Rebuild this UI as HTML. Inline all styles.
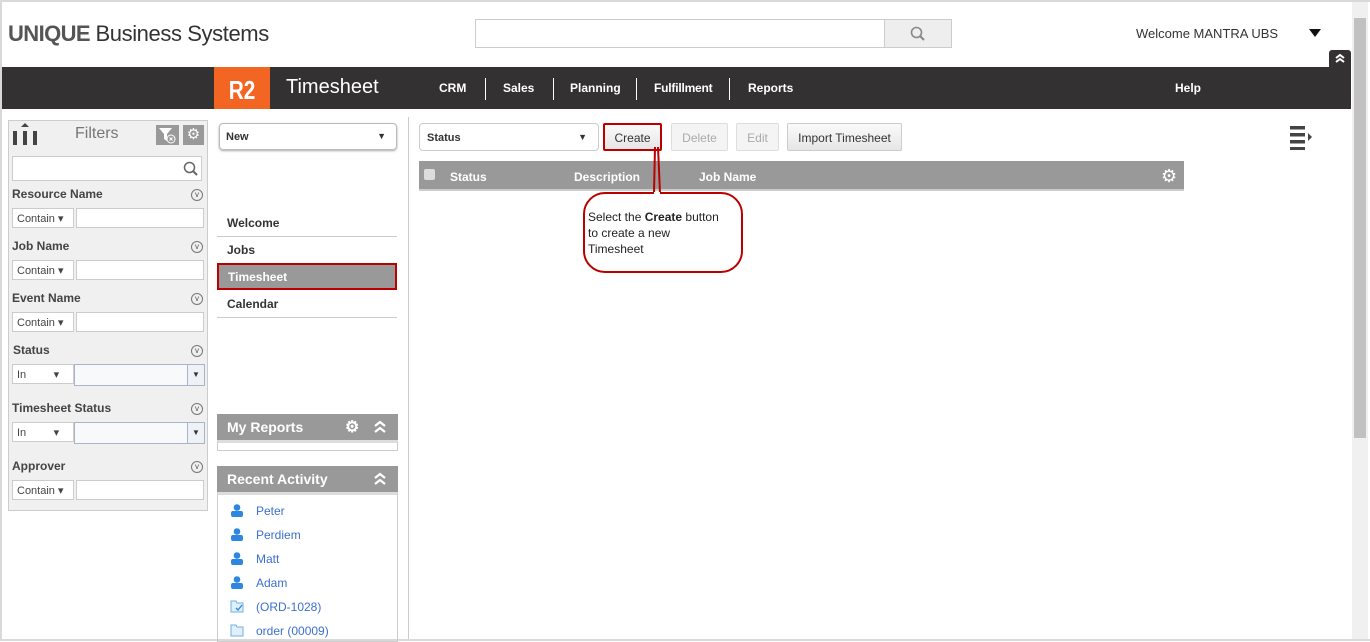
<!DOCTYPE html>
<html><head><style>
*{box-sizing:border-box;margin:0;padding:0}
body{width:1370px;height:641px;overflow:hidden;font-family:"Liberation Sans",Arial,sans-serif;font-size:12px;color:#333;background:#fff;position:relative}
.a{position:absolute}
.frame{left:0;top:0;width:1370px;height:641px;border:2px solid #d9d9d9;border-right:none;border-bottom:2px solid #d9d9d9}
.bar{left:2px;top:67px;width:1349px;height:42px;background:#333132}
.nav{top:81px;color:#fff;font-weight:bold;font-size:12px}
.sep{top:78px;width:1px;height:22px;background:#fff}
.fp{left:8px;top:120px;width:200px;height:391px;background:#f0f0f0;border:1px solid #ccc}
.lab{font-weight:bold;font-size:12px;color:#444}
.sel{background:#fff;border:1px solid #ccc;height:20px;font-size:11px;color:#444;padding:3px 4px}
.inp{background:#fff;border:1px solid #ccc;height:20px}
.circ{width:12px;height:12px;border:1px solid #777;border-radius:50%;font-size:8px;line-height:10px;text-align:center;color:#555}
.mi{left:217px;width:180px;height:27px;border-bottom:1px solid #ccc;font-weight:bold;padding:6px 10px;font-size:12px;color:#333}
.hd{left:217px;width:181px;height:26px;background:#999;color:#fff;font-weight:bold;font-size:14px;padding:5px 10px}
.btn{top:123px;height:28px;border:1px solid #ccc;background:linear-gradient(#fafafa,#e6e6e6);font-size:12px;text-align:center;padding-top:7px;border-radius:2px}
.ra{left:256px;color:#3b6fd0;font-size:12px}
.pi{left:230px;width:14px;height:13px}
</style></head><body>
<div class="a frame"></div>
<div class="a" style="left:8px;top:21px;font-size:22px;color:#555;letter-spacing:-0.6px"><b style="font-weight:900;color:#555">UNIQUE</b> <span style="color:#333;letter-spacing:-0.4px">Business Systems</span></div>
<div class="a" style="left:475px;top:19px;width:410px;height:29px;border:1px solid #ccc"></div>
<div class="a" style="left:884px;top:19px;width:68px;height:29px;border:1px solid #ccc;background:#eee"></div>
<svg class="a" style="left:910px;top:26px" width="16" height="16"><circle cx="6.5" cy="6.5" r="5" stroke="#888" stroke-width="1.6" fill="none"/><line x1="10" y1="10" x2="14" y2="14" stroke="#888" stroke-width="2"/></svg>
<div class="a" style="left:1136px;top:26px;font-size:13px;color:#333">Welcome MANTRA UBS</div>
<div class="a" style="left:1309px;top:29px;border-left:6px solid transparent;border-right:6px solid transparent;border-top:8px solid #111"></div>
<div class="a" style="left:1329px;top:50px;width:22px;height:17px;background:#333132;border-radius:3px 3px 0 0"></div>
<svg class="a" style="left:1334px;top:53px" width="12" height="11"><path d="M2 5l4-3 4 3M2 9l4-3 4 3" stroke="#fff" stroke-width="2" fill="none"/></svg>
<div class="a" style="left:1352px;top:2px;width:16px;height:637px;background:#f0f0f0"></div>
<div class="a" style="left:1354px;top:18px;width:12px;height:420px;background:#c1c1c1"></div>
<div class="a bar"></div>
<div class="a" style="left:214px;top:67px;width:56px;height:42px;background:#f26522"></div>
<div class="a" style="left:220px;top:75px;width:44px;height:30px;color:#fff;font-size:26px;font-weight:bold;text-align:center;transform:scaleX(0.8);line-height:30px">R2</div>
<div class="a" style="left:286px;top:76px;color:#fff;font-size:20px">Timesheet</div>
<div class="a nav" style="left:439px">CRM</div><div class="a sep" style="left:485px"></div>
<div class="a nav" style="left:503px">Sales</div><div class="a sep" style="left:553px"></div>
<div class="a nav" style="left:570px">Planning</div><div class="a sep" style="left:636px"></div>
<div class="a nav" style="left:654px;letter-spacing:-0.2px">Fulfillment</div><div class="a sep" style="left:729px"></div>
<div class="a nav" style="left:748px">Reports</div>
<div class="a nav" style="left:1175px">Help</div>

<div class="a fp"></div>
<svg class="a" style="left:12px;top:123px" width="28" height="24"><path d="M13 0l4 4h-8z" fill="#444"/><rect x="1" y="8" width="4" height="14" fill="#444"/><rect x="11" y="8" width="4" height="14" fill="#444"/><rect x="21" y="8" width="4" height="14" fill="#444"/></svg>
<div class="a" style="left:75px;top:125px;font-size:16px;color:#777">Filters</div>
<div class="a" style="left:156px;top:125px;width:23px;height:20px;background:#999"></div>
<svg class="a" style="left:156px;top:125px" width="23" height="20"><path d="M3 3h13l-5 6v7l-3-2v-5z" fill="#fff"/><circle cx="15" cy="14" r="4" fill="#999" stroke="#fff"/><path d="M13.5 12.5l3 3M16.5 12.5l-3 3" stroke="#fff"/></svg>
<div class="a" style="left:183px;top:125px;width:21px;height:20px;background:#999;color:#fff;font-size:15px;text-align:center;line-height:20px">⚙</div>
<div class="a inp" style="left:12px;top:156px;width:190px;height:25px"></div>
<svg class="a" style="left:183px;top:161px" width="16" height="16"><circle cx="6.5" cy="6.5" r="5" stroke="#666" stroke-width="1.5" fill="none"/><line x1="10" y1="10" x2="14" y2="14" stroke="#666" stroke-width="2"/></svg>
<div class="a lab" style="left:12px;top:187px">Resource Name</div><div class="a circ" style="left:191px;top:189px">v</div>
<div class="a sel" style="left:12px;top:208px;width:62px">Contain ▾</div><div class="a inp" style="left:76px;top:208px;width:128px"></div>
<div class="a lab" style="left:12px;top:239px">Job Name</div><div class="a circ" style="left:191px;top:241px">v</div>
<div class="a sel" style="left:12px;top:260px;width:62px">Contain ▾</div><div class="a inp" style="left:76px;top:260px;width:128px"></div>
<div class="a lab" style="left:12px;top:291px">Event Name</div><div class="a circ" style="left:191px;top:293px">v</div>
<div class="a sel" style="left:12px;top:312px;width:62px">Contain ▾</div><div class="a inp" style="left:76px;top:312px;width:128px"></div>
<div class="a lab" style="left:13px;top:343px">Status</div><div class="a circ" style="left:191px;top:345px">v</div>
<div class="a sel" style="left:12px;top:364px;width:62px">In &nbsp; &nbsp; &nbsp; &nbsp; ▾</div><div class="a inp" style="left:74px;top:364px;width:131px;height:22px;border-color:#a8b4c8;background:#f8f9fb"></div><div class="a" style="left:187px;top:365px;width:17px;height:20px;background:#eef1f6;border-left:1px solid #a8b4c8;font-size:8px;text-align:center;line-height:20px">▼</div>
<div class="a lab" style="left:12px;top:401px">Timesheet Status</div><div class="a circ" style="left:191px;top:403px">v</div>
<div class="a sel" style="left:12px;top:422px;width:62px">In &nbsp; &nbsp; &nbsp; &nbsp; ▾</div><div class="a inp" style="left:74px;top:422px;width:131px;height:22px;border-color:#a8b4c8;background:#f8f9fb"></div><div class="a" style="left:187px;top:423px;width:17px;height:20px;background:#eef1f6;border-left:1px solid #a8b4c8;font-size:8px;text-align:center;line-height:20px">▼</div>
<div class="a lab" style="left:12px;top:459px">Approver</div><div class="a circ" style="left:191px;top:461px">v</div>
<div class="a sel" style="left:12px;top:480px;width:62px">Contain ▾</div><div class="a inp" style="left:76px;top:480px;width:128px"></div>

<div class="a" style="left:219px;top:123px;width:178px;height:27px;border:1px solid #bbb;border-radius:4px;box-shadow:0 1px 2px #aaa;font-weight:bold;font-size:11px;padding:7px 6px">New<span style="position:absolute;right:10px;font-size:9px">▼</span></div>
<div class="a mi" style="top:210px">Welcome</div>
<div class="a mi" style="top:237px">Jobs</div>
<div class="a mi" style="top:263px;height:27px;background:#999;color:#fff;border:2px solid #b00;padding:5px 9px">Timesheet</div>
<div class="a mi" style="top:291px">Calendar</div>
<div class="a hd" style="top:414px">My Reports<span style="position:absolute;left:128px;top:3px;font-size:16px">⚙</span></div>
<svg class="a" style="left:373px;top:420px" width="14" height="14"><path d="M2 6l5-4 5 4M2 12l5-4 5 4" stroke="#fff" stroke-width="2.2" fill="none"/></svg>
<div class="a" style="left:217px;top:440px;width:181px;height:11px;border:1px solid #ccc;border-top:3px solid #ddd"></div>
<div class="a hd" style="top:466px">Recent Activity</div>
<svg class="a" style="left:373px;top:472px" width="14" height="14"><path d="M2 6l5-4 5 4M2 12l5-4 5 4" stroke="#fff" stroke-width="2.2" fill="none"/></svg>
<div class="a" style="left:217px;top:492px;width:181px;height:150px;border:1px solid #ccc;border-top:3px solid #ddd"></div>
<svg class="a pi" style="top:504px" viewBox="0 0 14 13"><circle cx="7" cy="3.5" r="3.3" fill="#2d87e0"/><rect x="1" y="7" width="12" height="6" rx="2" fill="#2d87e0"/></svg><div class="a ra" style="top:504px">Peter</div>
<svg class="a pi" style="top:528px" viewBox="0 0 14 13"><circle cx="7" cy="3.5" r="3.3" fill="#2d87e0"/><rect x="1" y="7" width="12" height="6" rx="2" fill="#2d87e0"/></svg><div class="a ra" style="top:528px">Perdiem</div>
<svg class="a pi" style="top:552px" viewBox="0 0 14 13"><circle cx="7" cy="3.5" r="3.3" fill="#2d87e0"/><rect x="1" y="7" width="12" height="6" rx="2" fill="#2d87e0"/></svg><div class="a ra" style="top:552px">Matt</div>
<svg class="a pi" style="top:576px" viewBox="0 0 14 13"><circle cx="7" cy="3.5" r="3.3" fill="#2d87e0"/><rect x="1" y="7" width="12" height="6" rx="2" fill="#2d87e0"/></svg><div class="a ra" style="top:576px">Adam</div>
<svg class="a pi" style="top:600px" viewBox="0 0 14 13"><path d="M1 1h5l1 2h6v9H1z" fill="#dff0fb" stroke="#6fb0e0"/><path d="M6 8l2 2 4-5" stroke="#2d87e0" fill="none" stroke-width="1.3"/></svg><div class="a ra" style="top:600px">(ORD-1028)</div>
<svg class="a pi" style="top:624px" viewBox="0 0 14 13"><path d="M1 1h5l1 2h6v9H1z" fill="#dff0fb" stroke="#6fb0e0"/></svg><div class="a ra" style="top:624px">order (00009)</div>

<div class="a" style="left:408px;top:117px;width:1px;height:522px;background:#ccc"></div>
<div class="a" style="left:419px;top:123px;width:180px;height:28px;border:1px solid #ccc;border-radius:4px;font-weight:bold;font-size:11px;padding:8px 7px">Status<span style="position:absolute;right:11px;font-size:9px">▼</span></div>
<div class="a btn" style="left:603px;width:59px;border:2px solid #b00;padding-top:6px">Create</div>
<div class="a btn" style="left:671px;width:57px;color:#aaa;background:#f4f4f4;border-color:#ddd">Delete</div>
<div class="a btn" style="left:736px;width:43px;color:#aaa;background:#f4f4f4;border-color:#ddd">Edit</div>
<div class="a btn" style="left:787px;width:115px">Import Timesheet</div>
<svg class="a" style="left:1290px;top:126px" width="24" height="24"><rect x="0" y="0" width="15" height="3.5" fill="#444"/><rect x="0" y="7" width="15" height="3.5" fill="#444"/><rect x="0" y="14" width="15" height="3.5" fill="#444"/><rect x="0" y="21" width="15" height="3" fill="#444"/><path d="M18 7l4 4-4 4z" fill="#444"/></svg>
<div class="a" style="left:419px;top:161px;width:765px;height:30px;background:#999;border-bottom:2px solid #ccc"></div>
<div class="a" style="left:424px;top:169px;width:11px;height:11px;background:#ddd;border-radius:2px"></div>
<div class="a" style="left:450px;top:170px;color:#fff;font-weight:bold">Status</div>
<div class="a" style="left:574px;top:170px;color:#fff;font-weight:bold">Description</div>
<div class="a" style="left:699px;top:170px;color:#fff;font-weight:bold">Job Name</div>
<div class="a" style="left:1161px;top:166px;color:#fff;font-size:18px">⚙</div>
<div class="a" style="left:583px;top:192px;width:160px;height:81px;border:2px solid #b00;border-radius:22px;background:#fff"></div>
<svg class="a" style="left:650px;top:147px" width="14" height="50"><path d="M5 0L4 46M8 0L10 46" stroke="#b00" stroke-width="2" fill="none"/><path d="M4 45h6v5h-6z" fill="#fff"/></svg>
<div class="a" style="left:588px;top:209px;font-size:12px;line-height:16px;color:#222">Select the <b>Create</b> button<br>to create a new<br>Timesheet</div>
</body></html>
